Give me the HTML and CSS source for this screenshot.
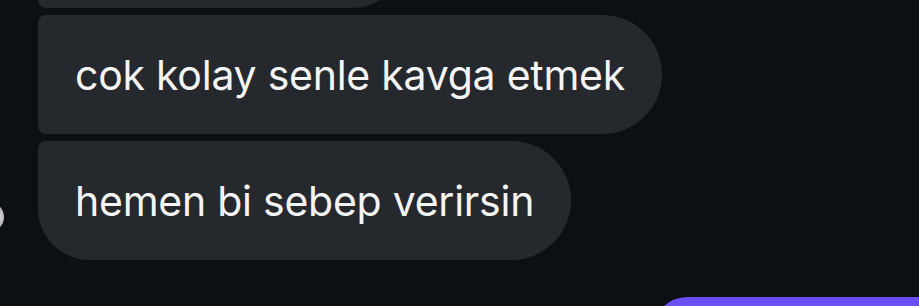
FILE: index.html
```html
<!DOCTYPE html>
<html lang="tr">
<head>
  <meta charset="UTF-8" />
  <meta name="viewport" content="width=device-width, initial-scale=1" />
  <title>Mesajlar</title>
  <link rel="stylesheet" href="styles.css">
</head>
<body>
  <div class="thread">
    <div class="row">
      <div class="bubble first"></div>
    </div>
    <div class="row">
      <div class="bubble middle">cok kolay senle kavga etmek</div>
    </div>
    <div class="row">
      <div class="avatar"></div>
      <div class="bubble last">hemen bi sebep verirsin</div>
    </div>
    <div class="row mine">
      <div class="bubble sent"></div>
    </div>
  </div>
</body>
</html>
```

FILE: styles.css
```css
* { box-sizing: border-box; }
html, body {
  margin: 0;
  padding: 0;
  background: #0c0f13;
  font-family: Inter, "Noto Sans", sans-serif;
  overflow: hidden;
  height: 306px;
}
.thread {
  display: flex;
  flex-direction: column;
  gap: 7px;
  padding-left: 38px;
  margin-top: -111px;
}
.row {
  display: flex;
  align-items: flex-end;
}
.avatar {
  width: 30px;
  height: 30px;
  border-radius: 50%;
  margin-left: -64px;
  margin-right: 34px;
  margin-bottom: 28px;
  background: radial-gradient(circle at 80% 50%, #d9d9d9 0, #8d8d8d 60%, #3a3a3a 100%);
}
.bubble {
  height: 119px;
  display: flex;
  align-items: center;
  padding: 0 37px;
  background: #25282d;
  color: #f4f4f5;
  font-size: 41px;
  letter-spacing: -0.25px;
  white-space: nowrap;
  border-radius: 8px 60px 60px 8px;
}
.bubble.first {
  width: 372px;
  border-radius: 60px 60px 60px 8px;
}
.bubble.last {
  border-radius: 8px 60px 60px 52px;
}
.row.mine {
  justify-content: flex-end;
  margin-top: 30px;
}
.bubble.sent {
  width: 266px;
  background: #6a4ff7;
  border-radius: 34px 0 0 8px;
}
```
